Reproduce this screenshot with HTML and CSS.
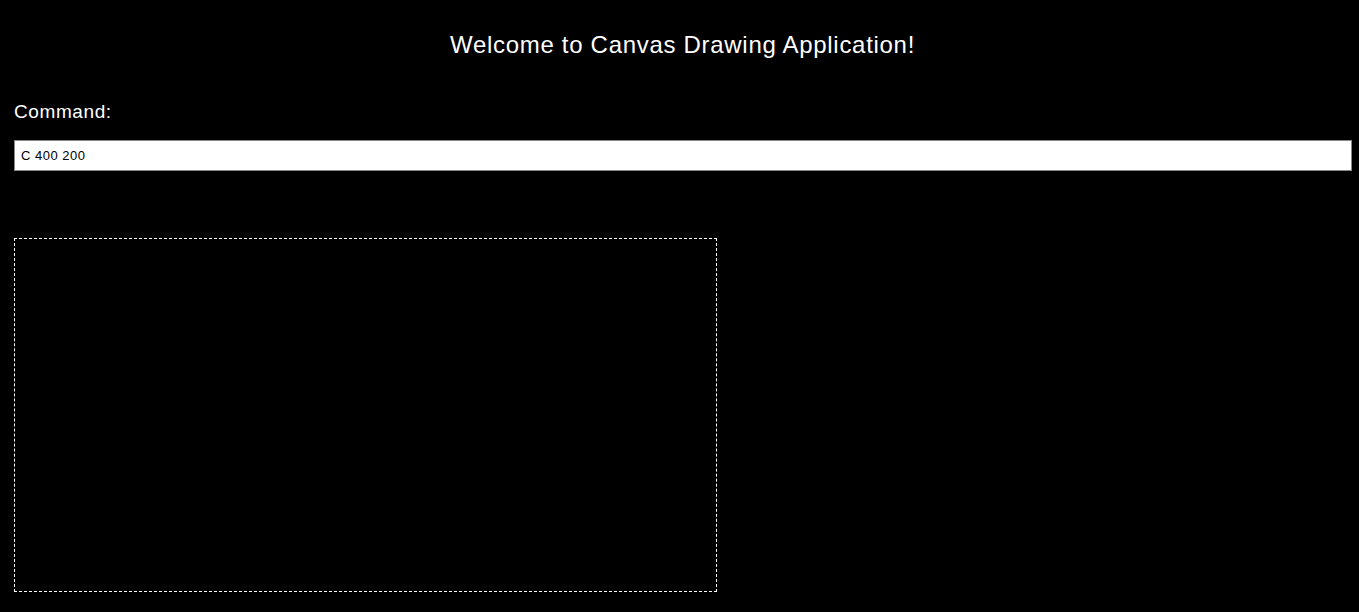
FILE: index.html
```html
<!DOCTYPE html>
<html>
<head>
<meta charset="utf-8">
<link rel="stylesheet" href="styles.css">
</head>
<body>
<main class="app">
  <h1 class="title">Welcome to Canvas Drawing Application!</h1>
  <label class="label" for="cmd">Command:</label>
  <input id="cmd" class="command" type="text" value="C 400 200">
  <div class="canvas"></div>
</main>
</body>
</html>
```
FILE: styles.css
```css
html, body {
  margin: 0;
  background: #000;
  color: #fff;
  font-family: "Liberation Sans", Arial, sans-serif;
}
.app {
  padding: 0 7px 0 14px;
  display: flex;
  flex-direction: column;
  align-items: flex-start;
}
.title {
  align-self: stretch;
  margin: 31px -7px 0 -8px;
  text-align: center;
  font-size: 24px;
  letter-spacing: 0.7px;
  font-weight: normal;
  line-height: 28px;
}
.label {
  margin-top: 42px;
  font-size: 19px;
  letter-spacing: 0.6px;
  line-height: 22px;
}
.command {
  box-sizing: border-box;
  margin-top: 17px;
  width: 1338px;
  height: 31px;
  padding: 0 6px;
  border: 1px solid #888;
  background: #fff;
  color: #000;
  font-family: "Liberation Sans", Arial, sans-serif;
  font-size: 13px;
  letter-spacing: 0.5px;
  outline: none;
}
.canvas {
  box-sizing: border-box;
  margin-top: 67px;
  width: 703px;
  height: 354px;
  border: 1px dashed #fff;
}
```
